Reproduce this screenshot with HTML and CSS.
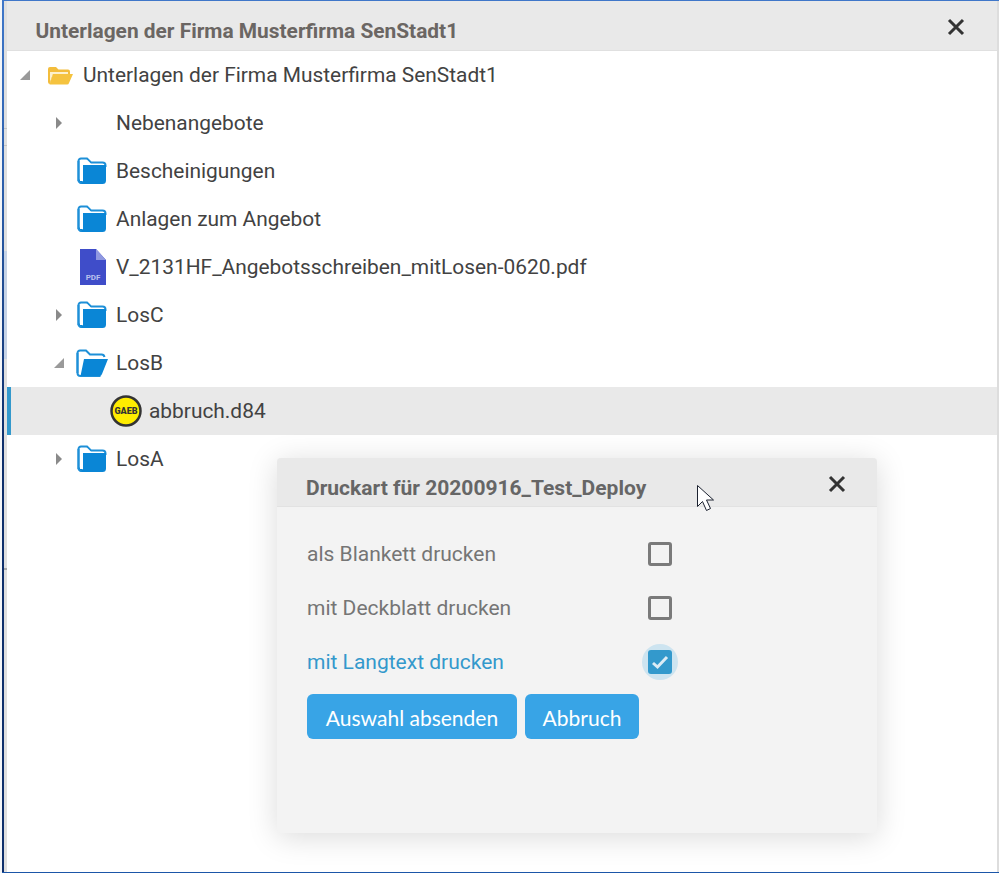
FILE: index.html
```html
<!DOCTYPE html>
<html lang="de">
<head>
    <meta charset="UTF-8">
    <meta name="viewport" content="width=device-width, initial-scale=1.0">
    <link rel="stylesheet" href="styles.css">
    <title>Unterlagen</title>
</head>
<body>
    <svg class="defs" width="0" height="0" aria-hidden="true">
        <symbol id="folder" viewBox="0 0 30 28">
            <path d="M1.500 24V4a2.500 2.500 0 0 1 2.500-2.500h6l4 4h11.500a3 3 0 0 1 3 3V10" fill="none" stroke="#1e90d8" stroke-width="2"/>
            <path d="M1.500 22v2a3 3 0 0 0 3 3h21a3.500 3.500 0 0 0 3.500-3.500V8H6v16.500z" fill="#0a86d6"/>
            <path d="M1.500 4v20a3 3 0 0 0 3 2" fill="none" stroke="#1e90d8" stroke-width="2"/>
            <path d="M3 3h7l4 4h-8v17H3z" fill="#fff"/>
        </symbol>
        <symbol id="folder-open" viewBox="0 0 32 28">
            <path d="M1.500 24V4a2.500 2.500 0 0 1 2.500-2.500h6l4 4h11.500a3 3 0 0 1 3 2.500" fill="none" stroke="#1e90d8" stroke-width="2"/>
            <path d="M1.500 4v20a3 3 0 0 0 3 3h20" fill="none" stroke="#1e90d8" stroke-width="2"/>
            <path d="M8 10h24l-6 15a3 3 0 0 1-2.500 2H4.500z" fill="#0a86d6"/>
        </symbol>
        <symbol id="toggle-closed" viewBox="0 0 8 12">
            <path d="M1 0l6 6-6 6z" fill="#8a8a8a"/>
        </symbol>
        <symbol id="toggle-open" viewBox="0 0 10 10">
            <path d="M10 0v10H0z" fill="#9a9a9a"/>
        </symbol>
        <symbol id="close" viewBox="0 0 18 18">
            <path d="M2 2l14 14M16 2L2 16" fill="none" stroke="#333" stroke-width="3"/>
        </symbol>
    </svg>

    <div class="frame">
        <div class="strip"></div>
        <div class="window">
            <header class="bar">
                <h1 class="bar-title">Unterlagen der Firma Musterfirma SenStadt1</h1>
                <svg class="bar-close"><use href="#close"/></svg>
            </header>

            <ul class="tree">
                <li class="node">
                    <span class="toggle"><svg class="tri-open"><use href="#toggle-open"/></svg></span>
                    <span class="icon">
                        <svg class="ico-root" viewBox="0 0 26 19">
                            <path d="M1 16V3a2 2 0 0 1 2-2h6l2.500 2.500H21a2 2 0 0 1 2 2V8H6l-3 10a2 2 0 0 1-2-2z" fill="#f3bd3c"/>
                            <path d="M3 6h18v2H6l-3 8z" fill="#fdf1cd"/>
                            <path d="M6 8h20l-4 9a2 2 0 0 1-2 1.500H2.500z" fill="#f5c33f"/>
                        </svg>
                    </span>
                    <span class="name">Unterlagen der Firma Musterfirma SenStadt1</span>
                </li>
                <li class="node level-1">
                    <span class="toggle"><svg class="tri-closed"><use href="#toggle-closed"/></svg></span>
                    <span class="icon"></span>
                    <span class="name">Nebenangebote</span>
                </li>
                <li class="node level-1">
                    <span class="toggle"></span>
                    <span class="icon"><svg class="ico-folder"><use href="#folder"/></svg></span>
                    <span class="name">Bescheinigungen</span>
                </li>
                <li class="node level-1">
                    <span class="toggle"></span>
                    <span class="icon"><svg class="ico-folder"><use href="#folder"/></svg></span>
                    <span class="name">Anlagen zum Angebot</span>
                </li>
                <li class="node level-1">
                    <span class="toggle"></span>
                    <span class="icon">
                        <svg class="ico-pdf" viewBox="0 0 26 36">
                            <path d="M0 0h16l10 11v25H0z" fill="#3f4dc9"/>
                            <path d="M16 0l10 11H16z" fill="#8f98e0"/>
                            <text x="13" y="31" class="pdf-label">PDF</text>
                        </svg>
                    </span>
                    <span class="name">V_2131HF_Angebotsschreiben_mitLosen-0620.pdf</span>
                </li>
                <li class="node level-1">
                    <span class="toggle"><svg class="tri-closed"><use href="#toggle-closed"/></svg></span>
                    <span class="icon"><svg class="ico-folder"><use href="#folder"/></svg></span>
                    <span class="name">LosC</span>
                </li>
                <li class="node level-1">
                    <span class="toggle"><svg class="tri-open"><use href="#toggle-open"/></svg></span>
                    <span class="icon"><svg class="ico-folder-open"><use href="#folder-open"/></svg></span>
                    <span class="name">LosB</span>
                </li>
                <li class="node level-2 selected">
                    <span class="toggle"></span>
                    <span class="icon">
                        <svg class="ico-gaeb" viewBox="0 0 32 32">
                            <circle cx="16" cy="16" r="14.500" fill="#ffec00" stroke="#333" stroke-width="2.500"/>
                            <text x="16" y="19" class="gaeb-label">GAEB</text>
                        </svg>
                    </span>
                    <span class="name">abbruch.d84</span>
                </li>
                <li class="node level-1">
                    <span class="toggle"><svg class="tri-closed"><use href="#toggle-closed"/></svg></span>
                    <span class="icon"><svg class="ico-folder"><use href="#folder"/></svg></span>
                    <span class="name">LosA</span>
                </li>
            </ul>

            <section class="dialog">
                <header class="dialog-bar">
                    <h2 class="dialog-title">Druckart für 20200916_Test_Deploy</h2>
                    <svg class="dialog-close"><use href="#close"/></svg>
                </header>
                <div class="dialog-body">
                    <div class="option">
                        <span class="option-label">als Blankett drucken</span>
                        <span class="check"></span>
                    </div>
                    <div class="option">
                        <span class="option-label">mit Deckblatt drucken</span>
                        <span class="check"></span>
                    </div>
                    <div class="option active">
                        <span class="option-label">mit Langtext drucken</span>
                        <span class="check checked">
                            <svg class="tick" viewBox="0 0 24 24"><path d="M5 13l4.500 4L19 7" fill="none" stroke="#dcecf5" stroke-width="3"/></svg>
                        </span>
                    </div>
                    <div class="actions">
                        <button type="button" class="btn btn-send">Auswahl absenden</button>
                        <button type="button" class="btn btn-cancel">Abbruch</button>
                    </div>
                </div>
            </section>

            <svg class="cursor" viewBox="0 0 18 27">
                <path d="M0.500 0.500v21l5-5 4 9 4-2-4-8.500h7z" fill="#fff" stroke="#1c2230" stroke-width="1"/>
            </svg>
        </div>
    </div>
</body>
</html>
```

FILE: styles.css
```css
html, body {
    height: 100%;
}

body {
    margin: 0;
    background-color: #f4f6f8;
    font-family: Roboto, "Liberation Sans", sans-serif;
    overflow: hidden;
}

ul {
    list-style: none;
    margin: 0;
    padding: 0;
}

h1, h2 {
    margin: 0;
}

.defs {
    position: absolute;
}

.frame {
    height: 100%;
    box-sizing: border-box;
    margin-left: 2px;
    padding-left: 2px;
    border-top: 1px solid #3f77c9;
    border-bottom: 1px solid #1b56a8;
    background: linear-gradient(#3f77c9 0, #2a5ca8 200px, #0e2f6c 440px, #0e2f6c 100%);
    display: flex;
}

/* what shows through behind the window on its left edge */
.strip {
    width: 3px;
    background: linear-gradient(#dfdfdf 0 127px, #c4c4c4 127px 128px, #dfdfdf 128px 144px,
        #c4c4c4 144px 145px, #dfdfdf 145px 250px, #c6d3e6 250px 358px, #dfdfdf 358px 567px,
        #a8a8a8 567px 569px, #dfdfdf 569px);
}

.window {
    flex: 1;
    position: relative;
    border-right: 2px solid #dddddd;
    background-color: #fff;
}

.bar {
    height: 49px;
    box-sizing: content-box;
    border-bottom: 1px solid #e0e0e0;
    background-color: #e9e9e9;
    display: flex;
    align-items: center;
    justify-content: space-between;
    padding: 0 32px 0 28.500px;
}

.bar-title {
    font-size: 20.900px;
    font-weight: 700;
    color: #6b6663;
    margin-top: 11px;
}

.bar-close {
    width: 18px;
    height: 18px;
    margin-top: 2px;
}

.node {
    height: 48px;
    display: flex;
    align-items: center;
    font-size: 20.900px;
    color: #424242;
}

.level-1 {
    padding-left: 33px;
}

.level-2 {
    padding-left: 66px;
}

.selected {
    background-color: #e9e9e9;
    box-shadow: inset 4px 0 0 #3399cc;
}

.toggle {
    width: 36px;
    display: flex;
    justify-content: center;
}

.level-1 .toggle {
    padding-left: 1px;
    width: 35px;
}

.icon {
    width: 35px;
    display: flex;
    justify-content: center;
    align-items: center;
    margin-left: -2px;
    margin-right: 7px;
}

.name {
    white-space: nowrap;
}

.tri-closed {
    width: 8px;
    height: 12px;
}

.tri-open {
    width: 10px;
    height: 10px;
}

.ico-root {
    width: 26px;
    height: 19px;
    margin-left: 2px;
}

.ico-folder {
    width: 30px;
    height: 28px;
}

.ico-folder-open {
    width: 32px;
    height: 28px;
}

.ico-pdf {
    width: 26px;
    height: 36px;
    margin-left: 2px;
}

.pdf-label {
    font-size: 8px;
    font-weight: 700;
    fill: #b9c0ee;
    text-anchor: middle;
}

.ico-gaeb {
    width: 32px;
    height: 32px;
    margin-left: 2px;
}

.gaeb-label {
    font-size: 9px;
    font-weight: 900;
    fill: #333;
    text-anchor: middle;
}

.dialog {
    position: absolute;
    left: 270px;
    top: 457px;
    width: 600px;
    height: 375px;
    border-radius: 4px;
    overflow: hidden;
    background-color: #f3f3f3;
    box-shadow: 0 4px 30px rgba(0, 0, 0, 0.15);
}

.dialog-bar {
    height: 49px;
    border-bottom: 1px solid #e2e2e2;
    background-color: #e9e9e9;
    display: flex;
    align-items: center;
    justify-content: space-between;
    padding: 12px 31px 0 29px;
    box-sizing: border-box;
}

.dialog-title {
    font-size: 21px;
    font-weight: 700;
    color: #666;
}

.dialog-close {
    width: 18px;
    height: 18px;
    margin-top: -8px;
}

.dialog-body {
    padding: 20px 30px 0;
}

.option {
    height: 54px;
    display: flex;
    align-items: center;
    font-size: 21px;
    color: #757575;
}

.option-label {
    width: 341px;
}

.check {
    position: relative;
    width: 24px;
    height: 24px;
    box-sizing: border-box;
    border: 3px solid #7a7a7a;
    border-radius: 3px;
}

.check.checked {
    border: none;
    background-color: #3399cc;
}

.check.checked::before {
    content: "";
    position: absolute;
    inset: -6px;
    z-index: -1;
    border-radius: 50%;
    background-color: #cde4f0;
}

.option.active {
    position: relative;
    z-index: 0;
}

.tick {
    display: block;
    width: 24px;
    height: 24px;
}

.active {
    color: #3399cc;
}

.actions {
    display: flex;
    gap: 8px;
    margin-top: 5px;
}

.btn {
    height: 45px;
    border: none;
    border-radius: 6px;
    background-color: #38a4e6;
    color: #fff;
    font-family: Lato, sans-serif;
    font-size: 21px;
    padding: 2px 0 0;
}

.btn-send {
    width: 210px;
}

.btn-cancel {
    width: 114px;
}

.cursor {
    position: absolute;
    left: 690px;
    top: 484px;
    width: 18px;
    height: 27px;
}
```
